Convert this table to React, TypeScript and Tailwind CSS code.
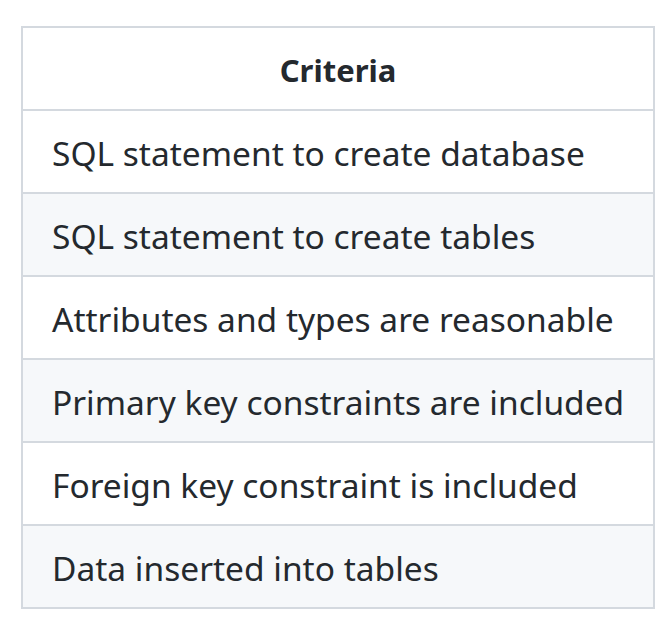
import React from "react";

const rows = [
  "SQL statement to create database",
  "SQL statement to create tables",
  "Attributes and types are reasonable",
  "Primary key constraints are included",
  "Foreign key constraint is included",
  "Data inserted into tables",
];

export default function App() {
  return (
    <div
      className="w-[657px] h-[621px] bg-white pt-[26px] pl-[21px] overflow-hidden"
      style={{ fontFamily: '"Noto Sans", "Open Sans", sans-serif' }}
    >
      <div className="w-[634px] border-2 border-[#d4d9df] text-[#24292e]">
        <div className="h-[81px] pt-[3px] flex items-center justify-center font-bold text-[31px]">
          Criteria
        </div>
        {rows.map((r, i) => (
          <div
            key={r}
            className={
              i % 2 === 0
                ? "h-[83px] pt-[4px] border-t-2 border-[#d4d9df] bg-white flex items-center pl-[29px] text-[33.5px]"
                : "h-[83px] pt-[4px] border-t-2 border-[#d4d9df] bg-[#f6f8fa] flex items-center pl-[29px] text-[33.5px]"
            }
          >
            {r}
          </div>
        ))}
      </div>
    </div>
  );
}
